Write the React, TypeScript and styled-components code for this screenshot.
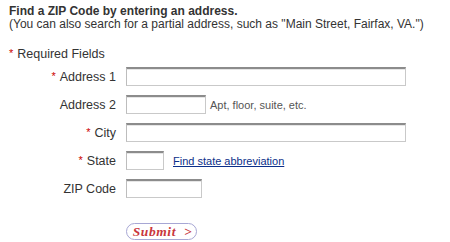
import React from 'react';
import styled, { createGlobalStyle } from 'styled-components';

const GlobalStyle = createGlobalStyle`
  html, body {
    margin: 0;
    padding: 0;
    background: #ffffff;
  }
  body {
    font-family: "Liberation Sans", Arial, Helvetica, sans-serif;
    font-size: 12px;
    color: #333333;
  }
`;

const Page = styled.div`
  padding: 5px 9px 0 9px;
`;

const Intro = styled.div`
  line-height: 13px;
  color: #333333;
`;

const IntroTitle = styled.div`
  font-weight: bold;
`;

const Required = styled.div`
  margin-top: 16px;
  line-height: 14px;
  font-size: 12.5px;
`;

const Star = styled.span`
  color: #cc0000;
  font-size: 11px;
  margin-right: 4px;
  position: relative;
  top: -1px;
`;

const Form = styled.form`
  display: grid;
  grid-template-columns: 107px auto;
  column-gap: 10px;
  row-gap: 9px;
  margin-top: 6px;
  align-items: center;
`;

const Label = styled.label`
  text-align: right;
  white-space: nowrap;
  font-size: 12.5px;
`;

const Field = styled.div`
  display: flex;
  align-items: center;
  gap: 4px;
  height: 19px;
`;

const Input = styled.input<{ $w: number }>`
  box-sizing: border-box;
  width: ${p => p.$w}px;
  height: 19px;
  margin: 0;
  padding: 0 3px;
  border: 1px solid #c9c9c9;
  border-top: 2px solid #8c8c8c;
  border-left-color: #bdbdbd;
  box-shadow: inset 0 1px 0 #e6e6e6;
  background: #ffffff;
  font: inherit;
`;

const Hint = styled.span`
  font-size: 11px;
  color: #555555;
`;

const Link = styled.a`
  margin-left: 5px;
  font-size: 11px;
  color: #0b2f8a;
  text-decoration: underline;
`;

const Actions = styled.div`
  grid-column: 2;
  margin-top: 16px;
`;

const SubmitButton = styled.button`
  box-sizing: border-box;
  width: 71px;
  height: 17px;
  padding: 0 0 0 2px;
  border: 1px solid #a7a7d4;
  border-radius: 9px;
  background: #ffffff;
  color: #c9373c;
  font-family: "Liberation Serif", "Times New Roman", serif;
  font-style: italic;
  font-weight: bold;
  font-size: 13.5px;
  letter-spacing: 0.6px;
  line-height: 15px;
  cursor: pointer;
  word-spacing: 4px;
`;

type Row = {
  label: string;
  required?: boolean;
  width: number;
  extra?: React.ReactNode;
};

const rows: Row[] = [
  { label: 'Address 1', required: true, width: 280 },
  { label: 'Address 2', width: 80, extra: <Hint>Apt, floor, suite, etc.</Hint> },
  { label: 'City', required: true, width: 280 },
  { label: 'State', required: true, width: 38, extra: <Link href="#">Find state abbreviation</Link> },
  { label: 'ZIP Code', width: 76 },
];

const App: React.FC = () => {
  return (
    <>
      <GlobalStyle />
      <Page>
        <Intro>
          <IntroTitle>Find a ZIP Code by entering an address.</IntroTitle>
          <div>(You can also search for a partial address, such as "Main Street, Fairfax, VA.")</div>
        </Intro>
        <Required>
          <Star>*</Star>Required Fields
        </Required>
        <Form onSubmit={e => e.preventDefault()}>
          {rows.map(row => (
            <React.Fragment key={row.label}>
              <Label>
                {row.required && <Star>*</Star>}
                {row.label}
              </Label>
              <Field>
                <Input $w={row.width} type="text" />
                {row.extra}
              </Field>
            </React.Fragment>
          ))}
          <Actions>
            <SubmitButton type="submit">Submit &gt;</SubmitButton>
          </Actions>
        </Form>
      </Page>
    </>
  );
};

export default App;
